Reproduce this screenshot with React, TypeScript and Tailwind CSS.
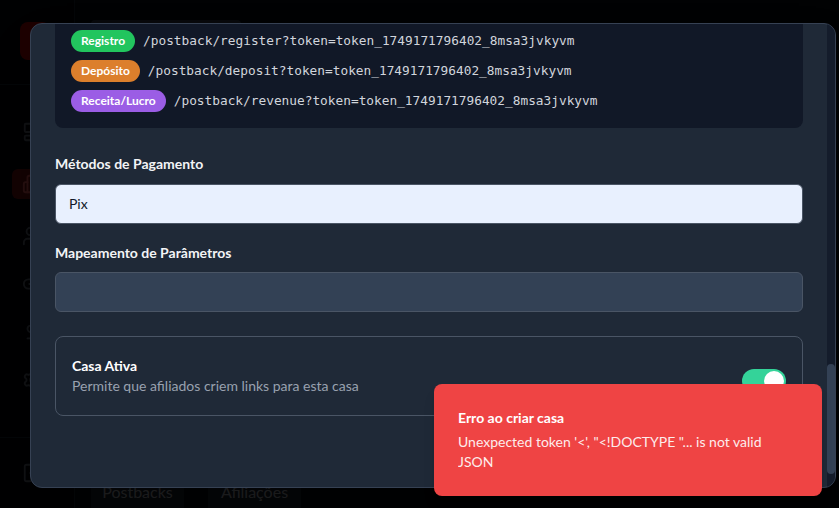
import { LayoutDashboard, Building2, Users, Link2, DollarSign, Settings, LogOut } from 'lucide-react'

const sans = { fontFamily: 'Lato, "Noto Sans", sans-serif' }

type Hook = { label: string; color: string; path: string }

const hooks: Hook[] = [
  { label: 'Registro', color: 'bg-[#22c55e]', path: '/postback/register?token=token_1749171796402_8msa3jvkyvm' },
  { label: 'Depósito', color: 'bg-[#dc7f2c]', path: '/postback/deposit?token=token_1749171796402_8msa3jvkyvm' },
  { label: 'Receita/Lucro', color: 'bg-[#9b5de5]', path: '/postback/revenue?token=token_1749171796402_8msa3jvkyvm' },
]

const PageBehind = () => (
  <div className="flex h-full w-full">
    <aside className="flex w-[75px] flex-col border-r border-gray-800 bg-gray-950">
      <div className="flex h-[85px] items-start border-b border-gray-800 pl-5 pt-[22px]">
        <div className="h-[38px] w-[30px] rounded-lg bg-red-700" />
      </div>
      <nav className="flex flex-col gap-[26px] pl-[22px] pt-9 text-gray-500">
        <LayoutDashboard size={22} />
        <div className="-ml-[10px] flex h-[30px] w-[40px] items-center rounded-md bg-red-900 pl-[10px] text-red-400">
          <Building2 size={22} />
        </div>
        <Users size={22} />
        <Link2 size={22} />
        <DollarSign size={22} />
        <Settings size={22} />
      </nav>
      <div className="mt-auto border-t border-gray-800 pb-6 pl-[22px] pt-6 text-gray-500">
        <LogOut size={22} />
      </div>
    </aside>
    <main className="flex flex-1 flex-col bg-[#0b0f17] px-4">
      <div className="mt-[20px] h-2 w-[150px] rounded bg-gray-700" />
      <div className="mt-auto flex gap-6">
        <div className="w-[93px] rounded-t-md bg-gray-800 py-1 text-center text-base text-gray-300">Postbacks</div>
        <div className="w-[93px] rounded-t-md bg-gray-800 py-1 text-center text-base text-gray-300">Afiliações</div>
      </div>
    </main>
  </div>
)

const Modal = () => (
  <div className="absolute left-[30px] top-[23px] flex h-[465px] w-[806px] overflow-hidden rounded-xl border border-gray-700 bg-[#1f2937] shadow-2xl">
    <div className="flex-1 px-6">
      <div className="flex flex-col gap-2 rounded-b-lg bg-[#111827] px-4 pb-4 pt-[6px]">
        {hooks.map((h) => (
          <div key={h.label} className="flex items-center">
            <span className={`mr-2 shrink-0 rounded-full px-2.5 py-[3px] text-xs font-bold leading-4 text-white ${h.color}`}>
              {h.label}
            </span>
            <code className="text-[12.8px] leading-5 text-gray-300" style={{ fontFamily: '"DejaVu Sans Mono", monospace' }}>
              {h.path}
            </code>
          </div>
        ))}
      </div>

      <label className="mt-[26px] block text-sm font-bold leading-5 text-gray-100">Métodos de Pagamento</label>
      <div className="mt-2.5 flex h-10 items-center rounded-md border border-gray-600 bg-[#e8f0fe] px-[13px] text-sm text-gray-900">
        Pix
      </div>

      <label className="mt-[19px] block text-sm font-bold leading-5 text-gray-100">Mapeamento de Parâmetros</label>
      <div className="mt-[9px] h-10 rounded-md border border-gray-600 bg-[#334155]" />

      <div className="mt-6 flex h-20 items-center justify-between rounded-lg border border-gray-600 px-4">
        <div>
          <div className="text-sm font-bold leading-5 text-white">Casa Ativa</div>
          <div className="text-sm leading-5 text-gray-400">Permite que afiliados criem links para esta casa</div>
        </div>
        <div className="mt-[9px] flex h-6 w-11 items-center justify-end rounded-full bg-[#34d399] px-0.5">
          <div className="h-5 w-5 rounded-full bg-white" />
        </div>
      </div>
    </div>
    <div className="w-2 bg-[#141c2b] pt-[340px]">
      <div className="h-[110px] rounded-full bg-[#334155]" />
    </div>
  </div>
)

const Toast = () => (
  <div className="absolute bottom-[12px] right-[17px] w-[388px] rounded-lg bg-[#ef4444] pb-6 pl-6 pr-8 pt-6 text-white shadow-lg">
    <div className="text-sm font-bold leading-5">Erro ao criar casa</div>
    <div className="mt-1 text-sm leading-5 opacity-90">
      Unexpected token '&lt;', "&lt;!DOCTYPE "... is not valid JSON
    </div>
  </div>
)

export default function App() {
  return (
    <div className="relative h-[508px] w-[839px] overflow-hidden bg-black" style={sans}>
      <PageBehind />
      <div className="absolute inset-0 bg-black/85" />
      <Modal />
      <Toast />
    </div>
  )
}
